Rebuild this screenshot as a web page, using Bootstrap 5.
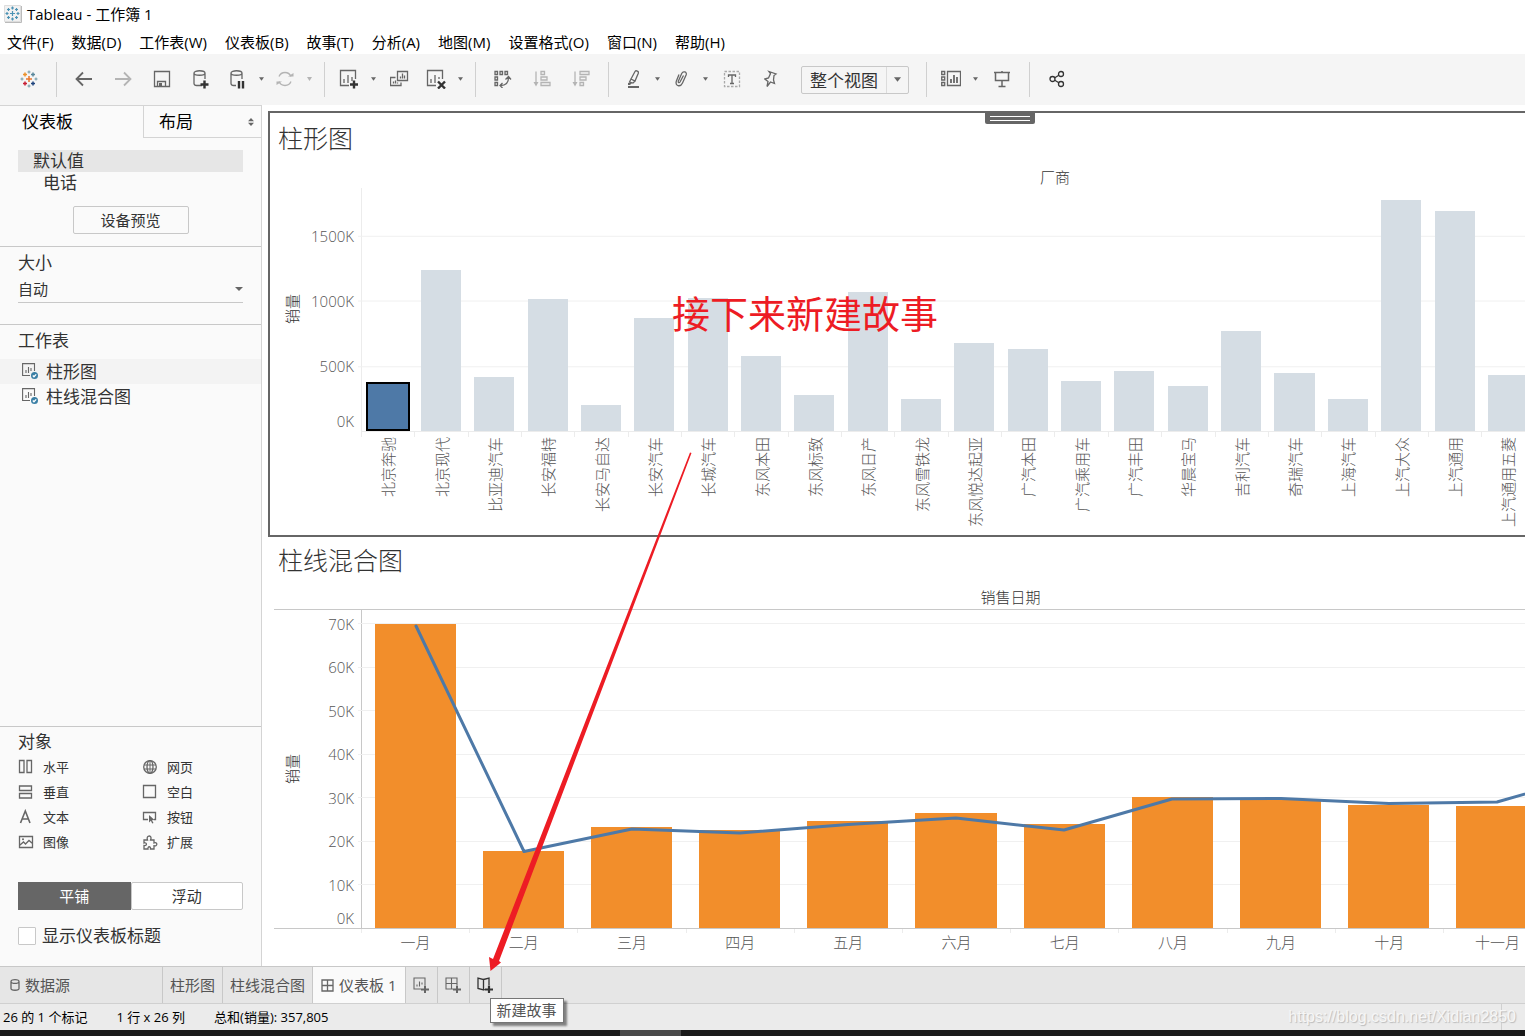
<!DOCTYPE html>
<html lang="zh-CN">
<head>
<meta charset="utf-8">
<meta name="viewport" content="width=device-width, initial-scale=1">
<title>Tableau - 工作簿 1</title>
<link href="https://cdn.jsdelivr.net/npm/bootstrap@5.3.0/dist/css/bootstrap.min.css" rel="stylesheet">
<style>
  body { font-family: "Open Sans", "Noto Sans CJK SC", sans-serif; font-size: 15px; line-height: 20px; color: #333; background: #fff; }
  button, select, input { font-family: inherit; }
  svg { display: block; flex: none; }
  .ico { fill: none; stroke: #666; stroke-width: 1.3; }
  .ico .solid, .solid { fill: #666; stroke: none; }
  .ico .strong { stroke: #333; stroke-width: 2.4; }
  .ico.faint { stroke: #b4b4b4; }
  .ico.faint .solid, .faint .solid { fill: #b4b4b4; }
  .ico.dark { stroke: #333; }

  /* title and menu */
  .title-line { height: 28px; padding-left: 4px; gap: 5px; color: #000; }
  .menu-line { height: 26px; padding: 2px 0 0 7px; gap: 18px; }
  .menu-line a { color: #000; text-decoration: none; font-size: 15px; white-space: nowrap; }

  /* toolbar */
  .tool-line { height: 51px; padding: 0 0 2px 9px; background: #f5f5f5; flex: none; }
  .tb { width: 39px; height: 32px; padding: 0; border: 0; background: none; display: flex; align-items: center; justify-content: center; flex: none; }
  .tb-pair { width: 34px; }
  .tb-drop { width: 14px; }
  .tb-sep { width: 1px; height: 35px; background: #d0d0d0; margin: 2px 7px 0 8px; flex: none; }
  .fit-box { width: 108px; height: 28px; margin: 2px 9px 0 11px; position: relative; flex: none; }
  .fit-box select { width: 100%; height: 28px; padding: 2px 24px 0 8px; border: 1px solid #c8c8c8; border-radius: 2px; background: #f5f5f5; font-size: 17px; color: #333; appearance: none; }
  .fit-box .fit-arrow { position: absolute; right: 1px; top: 1px; height: 26px; width: 22px; border-left: 1px solid #dcdcdc; pointer-events: none; display: flex; align-items: center; justify-content: center; }

  /* side pane */
  .side-pane { width: 262px; background: #fafafa; border-right: 1px solid #d4d4d4; border-top: 1px solid #d4d4d4; flex: none; font-size: 17px; }
  .side-tabs { height: 32px; flex: none; }
  .side-tabs button { border: 0; background: none; color: #000; font-size: 17px; text-align: left; padding: 0; }
  .side-tabs .tab-on { width: 143px; padding-left: 22px; }
  .side-tabs .tab-off { flex: 1; padding: 0 7px 0 15px; border-left: 1px solid #d4d4d4; border-bottom: 1px solid #d4d4d4; }
  .side-part { padding: 6px 18px 0; border-bottom: 1px solid #c8c8c8; flex: none; }
  .side-devices { padding: 12px 18px 4px; }
  .side-size { padding-bottom: 21px; }
  .side-objects { padding-top: 5px; }
  .part-name { font-size: 17px; line-height: 20px; margin: 0; font-weight: 400; }
  .part-sheets { padding-left: 18px; }
  .dev-on { height: 22px; line-height: 22px; padding-left: 15px; background: #e6e6e6; }
  .dev-sub { height: 22px; line-height: 22px; padding-left: 25px; }
  .btn-line { border: 1px solid #c8c8c8; border-radius: 2px; background: #fafafa; color: #333; font-size: 15px; line-height: 20px; height: 28px; padding: 0; }
  .btn-preview { width: 116px; }
  .size-box { position: relative; border-bottom: 1px solid #c8c8c8; padding-top: 3px; }
  .size-box select { width: 100%; height: 26px; border: 0; padding: 0; background: none; font-size: 15px; color: #333; appearance: none; }
  .size-box svg { position: absolute; right: 0; top: 14px; pointer-events: none; }
  .sheet-item { height: 25px; padding-left: 22px; gap: 7px; font-size: 17px; }
  .sheet-item.lit { background: #f3f3f3; }
  .obj-grid { font-size: 13px; padding-top: 2px; }
  .obj-item { height: 25px; gap: 9px; width: 124px; }
  .btn-solid { background: #666; border-color: #666; color: #fff; border-radius: 0; }
  .show-title { gap: 6px; }
  .show-title input { width: 18px; height: 18px; margin: 0; border: 1px solid #c8c8c8; border-radius: 1px; background: #fff; appearance: none; }

  /* views */
  .canvas-area { min-width: 0; padding: 6px 0 0 6px; }
  .view-box { position: relative; overflow: hidden; min-height: 0; border: 2px solid transparent; border-right: 0; }
  .view-one { flex: 422 1 0; border-color: #666; }
  .view-two { flex: 429 1 0; border-top: 0; border-bottom: 0; }
  .view-title { font-size: 25px; font-weight: 300; line-height: 48px; margin: 0; padding: 0 0 4px 8px; flex: none; font-family: "Noto Sans CJK SC", sans-serif; color: #333; }
  .view-two .view-title { line-height: 44px; }
  .view-grip { position: absolute; left: 57%; top: 0; width: 50px; height: 11px; background: #666; border-radius: 0 0 2px 2px; padding: 3px 5px 0; }
  .view-grip i { display: block; height: 1px; background: #fff; margin-bottom: 3px; }
  .viz { margin-left: 4px; min-height: 0; font-weight: 300; color: #555; }
  .viz-head { padding-left: 88px; height: 23px; line-height: 24px; flex: none; color: #333; font-size: 15px; }
  .view-two .viz-head { height: 25px; border-bottom: 1px solid #c8c8c8; }
  .viz-head div { text-align: center; }
  .span26 { width: 119.16%; }
  .span12 { width: 111.54%; }
  .viz-name { width: 36px; flex: none; display: flex; align-items: center; justify-content: center; color: #333; }
  .side-text { writing-mode: vertical-rl; text-orientation: sideways; transform: rotate(180deg); white-space: nowrap; line-height: 18px; }
  .viz-ticks { width: 51px; flex: none; padding-right: 7px; }
  .tick { display: flex; align-items: center; justify-content: flex-end; flex: none; }
  .tick-zero { align-items: flex-end; }
  .ticks-500 .tick { height: 26.8%; }
  .ticks-500 .tick-zero { height: 13.4%; }
  .ticks-10 .tick { height: 13.68%; }
  .ticks-10 .tick-zero { height: 6.84%; }
  .plot { position: relative; min-width: 0; border-left: 1px solid #ececec; }
  .view-two .plot { border-color: #c8c8c8; }
  .plot svg { position: absolute; left: 0; top: 0; width: 100%; height: 100%; overflow: visible; }
  .plot .lines { stroke: #f0f0f0; stroke-width: 1; }
  .plot .trend { fill: none; stroke: #4e79a7; stroke-width: 3; stroke-linejoin: round; stroke-linecap: round; }
  .bars { position: relative; height: 100%; display: flex; align-items: flex-end; margin-left: -1px; }
  .bars span { flex: none; background: #d5dde4; }
  .bars-a span { width: 3.44%; margin: 0 .572%; height: calc(var(--v) / 1865 * 100%); }
  .bars-a .picked { width: 3.784%; margin: 0 .4%; background: #4e79a7; border: 2px solid #000; }
  .bars-b span { width: 6.97%; margin: 0 1.163%; background: #f28e2b; height: calc(var(--v) / 731 * 100%); }
  .names { padding-left: 87px; flex: none; }
  .names > div > div { flex: none; border-left: 1px solid #ececec; }
  .names-a { height: 104px; }
  .names-a > div { border-top: 1px solid #ececec; height: 5px; }
  .names-a > div > div { width: 4.583%; display: flex; justify-content: center; height: 5px; }
  .names-a .side-text { margin-top: 5px; height: max-content; flex: none; line-height: 20px; }
  .names-b { height: 38px; border-top: 1px solid #c8c8c8; }
  .names-b > div > div { width: 9.295%; height: 4px; text-align: center; padding-top: 3px; line-height: 20px; }

  /* bottom bars */
  .tab-line { height: 38px; background: #e6e6e6; border-top: 1px solid #c8c8c8; border-bottom: 1px solid #d0d0d0; flex: none; }
  .tab-line button { border: 0; border-right: 1px solid #c8c8c8; background: none; color: #555; font-size: 15px; padding: 0 7px; display: flex; align-items: center; gap: 5px; flex: none; white-space: nowrap; }
  .tab-line .tab-source { width: 163px; padding-left: 10px; }
  .tab-line .tab-now { background: #fafafa; padding: 0 8px; }
  .tab-line .tab-add { width: 32px; padding: 0; justify-content: center; }
  .tab-hold { position: relative; display: flex; }
  .tip { position: absolute; left: 20px; top: 31px; z-index: 3; width: 74px; height: 25px; line-height: 22px; text-align: center; background: #fff; border: 1px solid #767676; box-shadow: 3px 3px 2px rgba(0,0,0,.45); color: #555; }
  .status-line { height: 26px; background: #ebebeb; font-size: 13px; color: #000; padding-left: 3px; gap: 29px; flex: none; position: relative; }
  .status-end { width: 1px; height: 100%; background: #d0d0d0; margin: 0 23px 0 auto; }
  .water { position: absolute; right: 9px; top: 3px; font: 16px/20px "Liberation Sans", sans-serif; color: #f6f6f6; text-shadow: 1px 1px 1px #bbb; }
  .task-line { height: 6px; background: #1a1a1a; flex: none; padding-left: 620px; }
  .task-line div { width: 61px; height: 6px; background: #4a4a4a; }

  /* notes drawn over the window */
  .note-text { position: absolute; left: 672px; top: 288px; font: 38px/48px "Noto Sans CJK SC", sans-serif; color: #ed1c24; white-space: nowrap; }
  .note-arrow { position: absolute; left: 485px; top: 450px; z-index: 2; pointer-events: none; }
</style>
<script src="https://cdn.jsdelivr.net/npm/bootstrap@5.3.0/dist/js/bootstrap.bundle.min.js"></script>
</head>
<body class="vh-100 d-flex flex-column overflow-hidden position-relative">

<svg width="0" height="0" class="position-absolute" aria-hidden="true">
  <symbol id="caret" viewBox="0 0 6 4"><path class="solid" d="M0 0h6L3 4z"/></symbol>
</svg>

<header class="title-line d-flex align-items-center flex-shrink-0">
  <svg width="18" height="18" viewBox="0 0 18 18"><path d="M.5.5h16v16H.5z" fill="#f1f1f1" stroke="#ddd"/><path d="M1 17.500h16.500V1" fill="none" stroke="#bbb"/><g stroke="#4b92b4" stroke-width="1.200"><path d="M6 8.500h5M8.500 6v5M8.500 1.500v3M7 3h3M8.500 12.500v3M7 14h3M1.500 8.500h3M3 7v3M12.500 8.500h3M14 7v3M3 4.500h3M4.500 3v3M11 4.500h3M12.500 3v3M3 12.500h3M4.500 11v3M11 12.500h3M12.500 11v3"/></g></svg>
  <span>Tableau - 工作簿 1</span>
</header>

<nav class="menu-line d-flex align-items-center flex-shrink-0">
  <a href="#">文件(F)</a><a href="#">数据(D)</a><a href="#">工作表(W)</a><a href="#">仪表板(B)</a><a href="#">故事(T)</a><a href="#">分析(A)</a><a href="#">地图(M)</a><a href="#">设置格式(O)</a><a href="#">窗口(N)</a><a href="#">帮助(H)</a>
</nav>

<div class="tool-line d-flex align-items-center" role="toolbar" aria-label="工具栏">
  <button class="tb" aria-label="开始页面"><svg width="18" height="18" viewBox="0 0 18 18" fill="none" stroke-width="1.500"><path d="M6 9h6M9 6v6" stroke="#e8762d"/><path d="M3 4.500h4M5 2.500v4" stroke="#eb912c"/><path d="M11 4.500h4M13 2.500v4" stroke="#59879b"/><path d="M3 13.500h4M5 11.500v4" stroke="#c72035"/><path d="M11 13.500h4M13 11.500v4" stroke="#1f447e"/><path d="M9 .5v3M7.500 2h3M9 14.500v3M7.500 16h3M.5 9h3M2 7.500v3M14.500 9h3M16 7.500v3" stroke="#7199a6" stroke-width="1"/></svg></button>
  <span class="tb-sep"></span>
  <button class="tb" aria-label="撤消"><svg class="ico" width="18" height="16" viewBox="0 0 18 16"><path d="M17 8H2M8 1.500L1.500 8 8 14.500" stroke-width="1.800"/></svg></button>
  <button class="tb" aria-label="重做"><svg class="ico faint" width="18" height="16" viewBox="0 0 18 16"><path d="M1 8h15M10 1.500L16.500 8 10 14.500" stroke-width="1.800"/></svg></button>
  <button class="tb" aria-label="保存"><svg class="ico" width="18" height="18" viewBox="0 0 18 18"><path d="M1.500 1.500h15v15h-15zM4.500 16.500v-5h8v5"/><path class="solid" d="M6 13h3v4H6z"/></svg></button>
  <button class="tb" aria-label="新建数据源"><svg class="ico" width="18" height="20" viewBox="0 0 18 20"><path d="M10 16.500H4.500c-1.500 0-2.500-.8-2.500-2V4c0-3 11-3 11 0v6M2 4c0 3 11 3 11 0"/><path class="strong" d="M8.500 15.500h8M12.500 11.500v8"/></svg></button>
  <button class="tb tb-pair" aria-label="暂停更新"><svg class="ico" width="16" height="20" viewBox="0 0 16 20"><path d="M7 16.500H4.500c-1.500 0-2.500-.8-2.500-2V4c0-3 11-3 11 0v6M2 4c0 3 11 3 11 0"/><path class="strong" d="M10 12v7.500M14 12v7.500" stroke-width="1.500"/></svg></button>
  <button class="tb tb-drop" aria-label="更多"><svg width="5" height="4"><use href="#caret"/></svg></button>
  <button class="tb tb-pair" aria-label="刷新"><svg class="ico faint" width="18" height="18" viewBox="0 0 18 18"><path d="M3 6.500a6.500 6.500 0 0 1 12 0M15 11.500a6.500 6.500 0 0 1-12 0"/><path class="solid" d="M12 6.500h5.500V3zM6 11.500H.5V15z"/></svg></button>
  <button class="tb tb-drop" aria-label="更多"><svg class="faint" width="5" height="4"><path class="solid" d="M0 0h5L2.500 4z"/></svg></button>
  <span class="tb-sep"></span>
  <button class="tb tb-pair" aria-label="新建工作表"><svg class="ico" width="20" height="20" viewBox="0 0 20 20"><path d="M10 16.500H1.500v-15h15V10M5 14v-4M9 14V6M13 12V8"/><path class="strong" d="M11 15.500h8M15 11.500v8"/></svg></button>
  <button class="tb tb-drop" aria-label="更多"><svg width="5" height="4"><use href="#caret"/></svg></button>
  <button class="tb" aria-label="复制"><svg class="ico" width="20" height="18" viewBox="0 0 20 18"><path d="M7.500 1.500h10v9h-10zM5.500 7.500h-5v8h10.500v-3M10.500 8.500v-2M12.500 8.500v-5M14.500 8.500v-3M3.500 13.500v-2M5.500 13.500v-3M7.500 13.500v-1"/></svg></button>
  <button class="tb tb-pair" aria-label="清除工作表"><svg class="ico" width="20" height="20" viewBox="0 0 20 20"><path d="M10 16.500H1.500v-15h15V10M5 14v-4M9 14V6M13 10V8"/><path class="strong" d="M12 12.500l7 7M19 12.500l-7 7" stroke-width="2"/></svg></button>
  <button class="tb tb-drop" aria-label="更多"><svg width="5" height="4"><use href="#caret"/></svg></button>
  <span class="tb-sep"></span>
  <button class="tb" aria-label="交换行和列"><svg class="ico" width="18" height="18" viewBox="0 0 18 18"><path d="M1 1.500h2.500v3H1zM6 1.500h2.500v3H6zM11 1.500h2.500v3H11zM1 7h2.500v3H1zM1 12.500h2.500v3H1zM6.500 15.500c5 0 8-2 8-8M8.500 13L6 15.500 8.500 18M11.500 9.500l3-3 2.500 3"/></svg></button>
  <button class="tb" aria-label="升序排序"><svg class="ico faint" width="18" height="18" viewBox="0 0 18 18"><path d="M3 1.500V15M8 1.500h3.500v3H8zM8 7h6v3H8zM8 12.500h9v3H8z"/><path class="solid" d="M.5 12h5L3 16.500z"/></svg></button>
  <button class="tb" aria-label="降序排序"><svg class="ico faint" width="18" height="18" viewBox="0 0 18 18"><path d="M3 1.500V15M8 1.500h9v3H8zM8 7h6v3H8zM8 12.500h3.500v3H8z"/><path class="solid" d="M.5 12h5L3 16.500z"/></svg></button>
  <span class="tb-sep"></span>
  <button class="tb tb-pair" aria-label="突出显示"><svg class="ico" width="12" height="18" viewBox="0 0 12 18"><path d="M4 9l4-7.500c1-1.500 4-.3 3.300 1.700L8 11zM4 9l-1.500 3 3.500 1 2-2"/><path class="solid" d="M1 13h4l-2 2H1zM1 16h11v2H1z"/></svg></button>
  <button class="tb tb-drop" aria-label="更多"><svg width="5" height="4"><use href="#caret"/></svg></button>
  <button class="tb tb-pair" aria-label="组成员"><svg class="ico" width="14" height="18" viewBox="0 0 14 18"><path d="M9.500 5.500L6 12c-.8 1.300-2.200.5-1.700-.8L7.700 3.500c1.500-3 5.500-1.500 4.500 1.300L8.500 13C6.500 17.500.8 16 2.300 11.300L5 4.500"/></svg></button>
  <button class="tb tb-drop" aria-label="更多"><svg width="5" height="4"><use href="#caret"/></svg></button>
  <button class="tb" aria-label="显示标记标签"><svg class="ico" width="18" height="18" viewBox="0 0 18 18"><path d="M1.500 1.500h15v15h-15z" stroke="#aaa" stroke-dasharray="2.500 1.500"/><path d="M5.500 7V5h7v2M9 5v8.500M7 13.500h4"/></svg></button>
  <button class="tb" aria-label="固定轴"><svg class="ico" width="14" height="18" viewBox="0 0 14 18"><path d="M5 1.500l7 2.500-2 1.500-.5 4.500 1 3.500-4-1.500L3 16.500l1-5L.8 9l3.700-1L6.500 3.500z"/></svg></button>
  <div class="fit-box"><select aria-label="适合"><option>整个视图</option><option>标准</option></select><span class="fit-arrow"><svg width="7" height="5" viewBox="0 0 6 4"><path class="solid" d="M0 0h6L3 4z"/></svg></span></div>
  <span class="tb-sep"></span>
  <button class="tb tb-pair" aria-label="显示/隐藏卡"><svg class="ico" width="20" height="18" viewBox="0 0 20 18"><path d="M.7 1.500h3v3h-3zM.7 7h3v3h-3zM.7 12.500h3v3h-3zM6.500 1.500h13v14h-13z"/><path d="M10 13V9M13 13V5M16 13V7" stroke-width="1.800"/></svg></button>
  <button class="tb tb-drop" aria-label="更多"><svg width="5" height="4"><use href="#caret"/></svg></button>
  <button class="tb" aria-label="演示模式"><svg class="ico" width="18" height="18" viewBox="0 0 18 18"><path d="M1 2.500h16M2.500 2.500v8h13v-8M9 1v2M9 10.500v6M5.500 16.500h7" stroke-width="1.500"/></svg></button>
  <span class="tb-sep"></span>
  <button class="tb" aria-label="共享"><svg class="ico dark" width="16" height="18" viewBox="0 0 16 18"><circle cx="3.500" cy="9" r="2.500"/><circle cx="12" cy="4" r="2.500"/><circle cx="12" cy="14" r="2.500"/><path d="M5.800 7.700l4-2.400M5.800 10.300l4 2.400"/></svg></button>
</div>

<main class="d-flex flex-grow-1 overflow-hidden">
  <aside class="side-pane d-flex flex-column">
    <div class="side-tabs d-flex">
      <button class="tab-on">仪表板</button>
      <button class="tab-off d-flex align-items-center justify-content-between">布局<svg width="6" height="8" viewBox="0 0 6 8"><path class="solid" d="M0 3.200h6L3 0zM0 4.800h6L3 8z"/></svg></button>
    </div>
    <section class="side-part side-devices">
      <div class="dev-on" role="option" aria-selected="true">默认值</div>
      <div class="dev-sub">电话</div>
      <div class="text-center py-2 mt-1"><button class="btn-line btn-preview">设备预览</button></div>
    </section>
    <section class="side-part side-size">
      <h2 class="part-name"><label for="size">大小</label></h2>
      <div class="size-box"><select id="size"><option>自动</option><option>固定大小</option></select><svg width="8" height="4" viewBox="0 0 8 4"><path class="solid" d="M0 0h8L4 4z"/></svg></div>
    </section>
    <section class="side-part flex-grow-1 px-0">
      <h2 class="part-name part-sheets mb-2">工作表</h2>
      <div class="sheet-item lit d-flex align-items-center"><svg class="ico" width="17" height="17" viewBox="0 0 17 17"><path d="M8 12.500H.6V.6h11.900V8M4 10V7M6.500 10V4M9 8V5" stroke-width="1.100"/><circle cx="12.500" cy="12.500" r="3.500" fill="#3a7fa5" stroke="none"/><path d="M10.800 12.500l1.200 1.300 2.200-2.400" stroke="#fff"/></svg>柱形图</div>
      <div class="sheet-item d-flex align-items-center"><svg class="ico" width="17" height="17" viewBox="0 0 17 17"><path d="M8 12.500H.6V.6h11.900V8M4 10V7M6.500 10V4M9 8V5" stroke-width="1.100"/><circle cx="12.500" cy="12.500" r="3.500" fill="#3a7fa5" stroke="none"/><path d="M10.800 12.500l1.200 1.300 2.200-2.400" stroke="#fff"/></svg>柱线混合图</div>
    </section>
    <section class="side-part side-objects border-0 pb-3">
      <h2 class="part-name">对象</h2>
      <div class="obj-grid d-flex flex-wrap me-n4">
        <div class="obj-item d-flex align-items-center"><svg class="ico" width="16" height="16" viewBox="0 0 16 16"><path d="M1.500 1.500h4.500v12H1.500zM9 1.500h4.500v12H9z"/></svg>水平</div>
        <div class="obj-item w-auto d-flex align-items-center"><svg class="ico" width="16" height="16" viewBox="0 0 16 16"><circle cx="8" cy="8" r="6.300"/><ellipse cx="8" cy="8" rx="3" ry="6.300"/><path d="M8 1.700v12.600M2 6h12M2 10h12" stroke-width="1"/></svg>网页</div>
        <div class="obj-item d-flex align-items-center"><svg class="ico" width="16" height="16" viewBox="0 0 16 16"><path d="M1.500 2h12v4.500h-12zM1.500 9.500h12V14h-12z"/></svg>垂直</div>
        <div class="obj-item w-auto d-flex align-items-center"><svg class="ico" width="16" height="16" viewBox="0 0 16 16"><path d="M1.500 1.500h12v12h-12z"/></svg>空白</div>
        <div class="obj-item d-flex align-items-center"><svg class="ico" width="16" height="16" viewBox="0 0 16 16"><path d="M2.500 14L7.300 2 12 14M4.500 10H10" stroke-width="1.600"/></svg>文本</div>
        <div class="obj-item w-auto d-flex align-items-center"><svg class="ico" width="16" height="16" viewBox="0 0 16 16"><path d="M6 10.500H1.500v-7h12v7H12"/><path class="solid" d="M7 6l5.500 5-2.500.3 1.500 2.700-1.300.6-1.300-2.800L7 13.500z"/></svg>按钮</div>
        <div class="obj-item d-flex align-items-center"><svg class="ico" width="16" height="16" viewBox="0 0 16 16"><path d="M1.500 2.500h13v11h-13zM2 11l3.500-3 2 2L11 6.500l3.500 3"/><circle class="solid" cx="5" cy="5.300" r="1"/></svg>图像</div>
        <div class="obj-item w-auto d-flex align-items-center"><svg class="ico" width="16" height="16" viewBox="0 0 16 16"><path d="M2 6h3.500c-1.800-4.500 4-5.500 3.500-1.500L8.500 6H12v3c3.500-1.500 4 3.500 0 2.700V15H8.500c.5-3-3-3-2.500 0H2v-3.500c3.500.5 3-3.500 0-2.500z"/></svg>扩展</div>
      </div>
      <div class="d-flex pt-4 mt-1 pb-2" role="group" aria-label="放置方式">
        <button class="btn-line btn-solid w-50">平铺</button><button class="btn-line w-50 bg-white">浮动</button>
      </div>
      <div class="show-title d-flex align-items-center pt-2 pb-1">
        <input type="checkbox" id="showTitle"><label for="showTitle">显示仪表板标题</label>
      </div>
    </section>
  </aside>

  <div class="canvas-area d-flex flex-column flex-grow-1">
    <section class="view-box view-one d-flex flex-column">
      <div class="view-grip"><i></i><i></i></div>
      <h1 class="view-title">柱形图</h1>
      <div class="viz d-flex flex-column flex-grow-1">
        <div class="viz-head"><div class="span26">厂商</div></div>
        <div class="d-flex flex-grow-1">
          <div class="viz-name"><span class="side-text">销量</span></div>
          <div class="viz-ticks ticks-500 d-flex flex-column justify-content-end">
            <div class="tick">1500K</div><div class="tick">1000K</div><div class="tick">500K</div><div class="tick tick-zero">0K</div>
          </div>
          <div class="plot flex-grow-1">
            <svg class="lines" viewBox="0 0 1163 244" preserveAspectRatio="none"><path vector-effect="non-scaling-stroke" d="M-4 48.500H1163M-4 113.500H1163M-4 179.500H1163"/></svg>
            <div class="bars bars-a">
              <span class="picked" style="--v:375"></span><span style="--v:1233"></span><span style="--v:413"></span><span style="--v:1011"></span><span style="--v:199"></span><span style="--v:865"></span><span style="--v:1018"></span><span style="--v:574"></span><span style="--v:276"></span><span style="--v:1064"></span><span style="--v:245"></span><span style="--v:674"></span><span style="--v:628"></span><span style="--v:383"></span><span style="--v:459"></span><span style="--v:345"></span><span style="--v:766"></span><span style="--v:444"></span><span style="--v:245"></span><span style="--v:1776"></span><span style="--v:1692"></span><span style="--v:429"></span>
            </div>
          </div>
        </div>
        <div class="names names-a"><div class="d-flex">
          <div><span class="side-text">北京奔驰</span></div><div><span class="side-text">北京现代</span></div><div><span class="side-text">比亚迪汽车</span></div><div><span class="side-text">长安福特</span></div><div><span class="side-text">长安马自达</span></div><div><span class="side-text">长安汽车</span></div><div><span class="side-text">长城汽车</span></div><div><span class="side-text">东风本田</span></div><div><span class="side-text">东风标致</span></div><div><span class="side-text">东风日产</span></div><div><span class="side-text">东风雪铁龙</span></div><div><span class="side-text">东风悦达起亚</span></div><div><span class="side-text">广汽本田</span></div><div><span class="side-text">广汽乘用车</span></div><div><span class="side-text">广汽丰田</span></div><div><span class="side-text">华晨宝马</span></div><div><span class="side-text">吉利汽车</span></div><div><span class="side-text">奇瑞汽车</span></div><div><span class="side-text">上海汽车</span></div><div><span class="side-text">上汽大众</span></div><div><span class="side-text">上汽通用</span></div><div><span class="side-text">上汽通用五菱</span></div>
        </div></div>
      </div>
    </section>

    <section class="view-box view-two d-flex flex-column">
      <h1 class="view-title">柱线混合图</h1>
      <div class="viz d-flex flex-column flex-grow-1">
        <div class="viz-head"><div class="span12">销售日期</div></div>
        <div class="d-flex flex-grow-1">
          <div class="viz-name"><span class="side-text">销量</span></div>
          <div class="viz-ticks ticks-10 d-flex flex-column justify-content-end">
            <div class="tick">70K</div><div class="tick">60K</div><div class="tick">50K</div><div class="tick">40K</div><div class="tick">30K</div><div class="tick">20K</div><div class="tick">10K</div><div class="tick tick-zero">0K</div>
          </div>
          <div class="plot flex-grow-1">
            <svg class="lines" viewBox="0 0 1163 318" preserveAspectRatio="none"><path vector-effect="non-scaling-stroke" d="M-4 13.500H1163M-4 57.500H1163M-4 100.500H1163M-4 144.500H1163M-4 187.500H1163M-4 231.500H1163M-4 274.500H1163"/></svg>
            <div class="bars bars-b">
              <span style="--v:699"></span><span style="--v:177"></span><span style="--v:232"></span><span style="--v:225"></span><span style="--v:246"></span><span style="--v:264"></span><span style="--v:239"></span><span style="--v:301"></span><span style="--v:294"></span><span style="--v:283"></span><span style="--v:280"></span>
            </div>
            <svg viewBox="0 0 1163 318" preserveAspectRatio="none"><path class="trend" vector-effect="non-scaling-stroke" d="M54 16L162 241.500L270 219L378 223L486 214.500L594 208L702 220L810 189L919 188.500L1027 193.500L1135 192L1243 161"/></svg>
          </div>
        </div>
        <div class="names names-b"><div class="d-flex">
          <div>一月</div><div>二月</div><div>三月</div><div>四月</div><div>五月</div><div>六月</div><div>七月</div><div>八月</div><div>九月</div><div>十月</div><div>十一月</div>
        </div></div>
      </div>
    </section>
  </div>
</main>

<nav class="tab-line d-flex" aria-label="工作表标签">
  <button class="tab-source"><svg class="ico" width="10" height="14" viewBox="0 0 10 14"><path d="M1 3.500v7c0 2.300 8 2.300 8 0v-7M1 3.500c0-2.500 8-2.500 8 0s-8 2.500-8 0z"/></svg>数据源</button>
  <button>柱形图</button>
  <button>柱线混合图</button>
  <button class="tab-now"><svg class="ico" width="13" height="13" viewBox="0 0 13 13"><path d="M1 1h11v11H1zM6.500 1v11M1 6.500h11"/></svg>仪表板 1</button>
  <button class="tab-add" aria-label="新建工作表"><svg class="ico" width="16" height="16" viewBox="0 0 16 16"><path d="M8 12H1V1h11v7M4 9.500v-2M6.500 9.500v-5M9 7.500v-2" stroke-width="1.100"/><path d="M8 12.500h8M12 8.500v8" stroke-width="2"/></svg></button>
  <button class="tab-add" aria-label="新建仪表板"><svg class="ico" width="16" height="16" viewBox="0 0 16 16"><path d="M8 12H1V1h11v7M6.500 1v11M1 6.500h11" stroke-width="1.100"/><path d="M8 12.500h8M12 8.500v8" stroke-width="2"/></svg></button>
  <div class="tab-hold">
    <button class="tab-add" aria-label="新建故事"><svg class="ico dark" width="16" height="16" viewBox="0 0 16 16"><path d="M6.500 2.500v10.500L1 11.500V1zM6.500 2.500L12 1v7M6.500 13L8 12.500"/><path d="M8 12.500h8M12 8.500v8" stroke-width="2.200"/></svg></button>
    <div class="tip" role="tooltip">新建故事</div>
  </div>
</nav>

<footer class="status-line d-flex align-items-center">
  <span>26 的 1 个标记</span><span>1 行 x 26 列</span><span>总和(销量): 357,805</span>
  <span class="status-end"></span>
  <span class="water">https://blog.csdn.net/Xidian2850</span>
</footer>
<div class="task-line"><div></div></div>

<div class="note-text">接下来新建故事</div>
<svg class="note-arrow" width="210" height="524" viewBox="485 450 210 524"><path fill="#ed1c24" d="M490.500 971L489 957l4 2L690 452.500l1.500.5L499 961l2 1.500z"/></svg>
</body>
</html>
